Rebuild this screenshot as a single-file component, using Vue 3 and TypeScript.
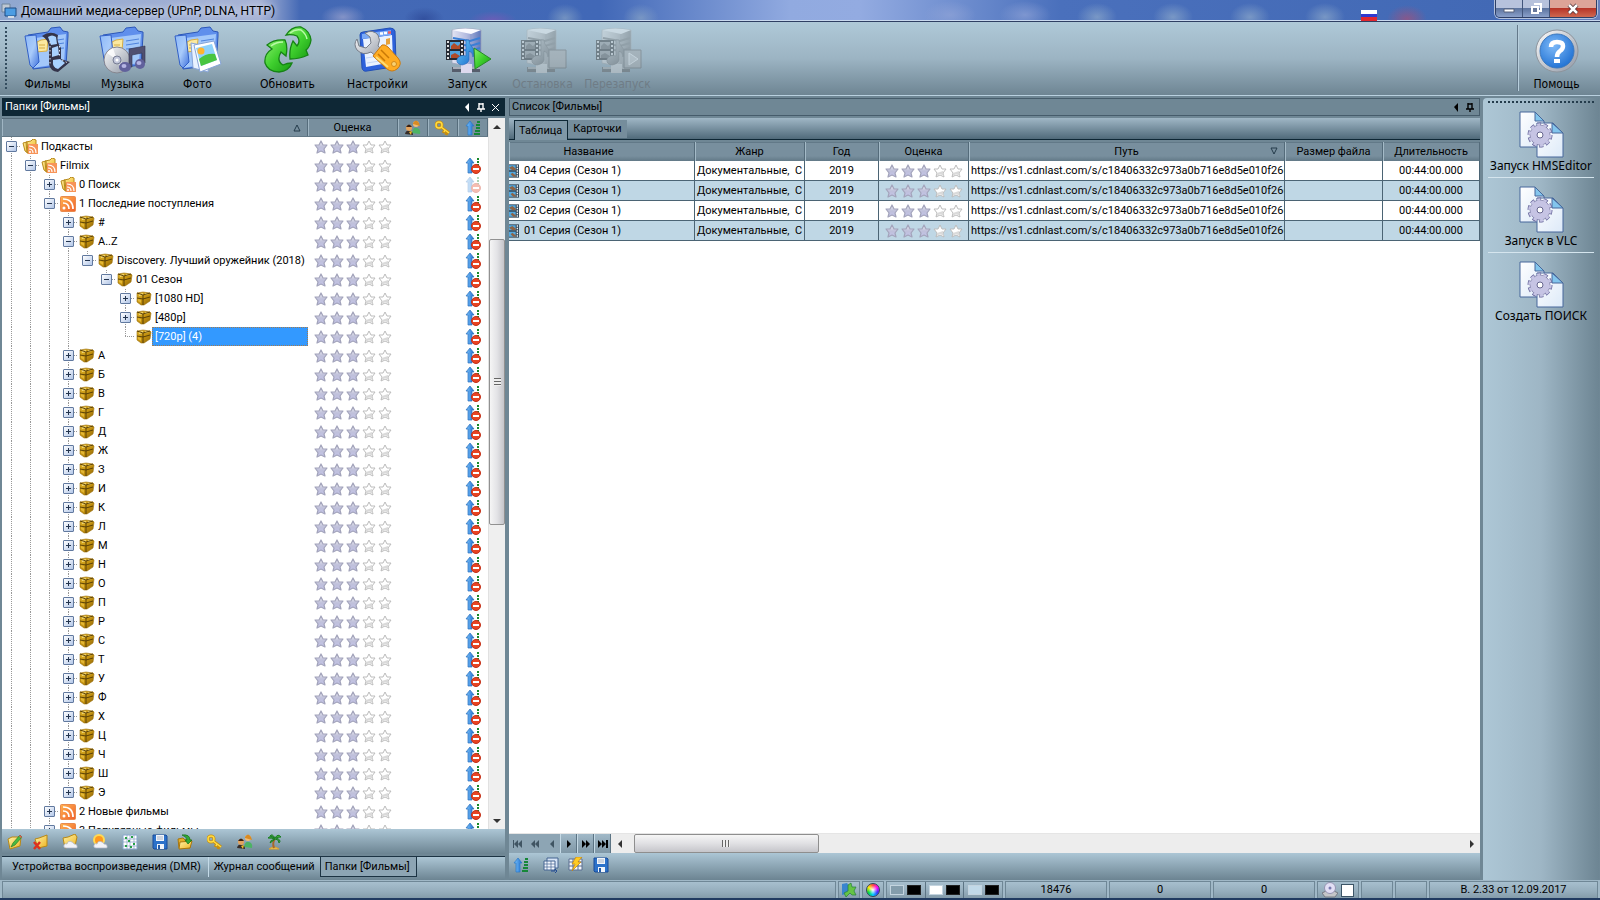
<script setup lang="ts">
import { ref } from 'vue'

interface ToolButton { label: string; icon: string; gap?: boolean; disabled?: boolean }
interface TreeNode { label: string; depth: number; icon: string; state: 'open' | 'closed' | 'leaf'; last?: boolean; arrow: 'none' | 'faded' | 'full'; selected?: boolean }

const tools: ToolButton[] = [
  { label: 'Фильмы', icon: 'films' },
  { label: 'Музыка', icon: 'music' },
  { label: 'Фото', icon: 'photo' },
  { label: 'Обновить', icon: 'refresh', gap: true },
  { label: 'Настройки', icon: 'settings', gap: true },
  { label: 'Запуск', icon: 'start', gap: true },
  { label: 'Остановка', icon: 'stop', disabled: true },
  { label: 'Перезапуск', icon: 'restart', disabled: true },
]

const letters = ['А', 'Б', 'В', 'Г', 'Д', 'Ж', 'З', 'И', 'К', 'Л', 'М', 'Н', 'О', 'П', 'Р', 'С', 'Т', 'У', 'Ф', 'Х', 'Ц', 'Ч', 'Ш', 'Э']

const nodes: TreeNode[] = [
  { label: 'Подкасты', depth: 0, icon: 'folder', state: 'open', arrow: 'none' },
  { label: 'Filmix', depth: 1, icon: 'folder', state: 'open', arrow: 'full' },
  { label: '0 Поиск', depth: 2, icon: 'folder', state: 'closed', arrow: 'faded' },
  { label: '1 Последние поступления', depth: 2, icon: 'rss', state: 'open', arrow: 'full' },
  { label: '#', depth: 3, icon: 'box', state: 'closed', arrow: 'full' },
  { label: 'A..Z', depth: 3, icon: 'box', state: 'open', arrow: 'full' },
  { label: 'Discovery. Лучший оружейник (2018)', depth: 4, icon: 'box', state: 'open', last: true, arrow: 'full' },
  { label: '01 Сезон', depth: 5, icon: 'box', state: 'open', last: true, arrow: 'full' },
  { label: '[1080 HD]', depth: 6, icon: 'box', state: 'closed', arrow: 'full' },
  { label: '[480p]', depth: 6, icon: 'box', state: 'closed', arrow: 'full' },
  { label: '[720p] (4)', depth: 6, icon: 'box', state: 'leaf', last: true, arrow: 'full', selected: true },
  ...letters.map((label, i): TreeNode => ({ label, depth: 3, icon: 'box', state: 'closed', last: i === letters.length - 1, arrow: 'full' })),
  { label: '2 Новые фильмы', depth: 2, icon: 'rss', state: 'closed', arrow: 'full' },
  { label: '3 Популярные фильмы', depth: 2, icon: 'rss', state: 'closed', arrow: 'full' },
]

const path = 'https://vs1.cdnlast.com/s/c18406332c973a0b716e8d5e010f266b'
const episodes = ['04', '03', '02', '01'].map((n) => ({
  name: `${n} Серия (Сезон 1)`, genre: 'Документальные,  С', year: '2019', path, size: '', duration: '00:44:00.000',
}))

const scripts = ['Запуск HMSEditor', 'Запуск в VLC', 'Создать ПОИСК']
const treeTools = [
  { icon: 'edit', name: 'Изменить' }, { icon: 'remove', name: 'Удалить' }, { icon: 'cloudfolder', name: 'Обзор' },
  { icon: 'weather', name: 'Погода' }, { icon: 'grid', name: 'Сетка' }, { icon: 'save', name: 'Сохранить' },
  { icon: 'load', name: 'Загрузить' }, { icon: 'key', name: 'Доступ' }, { icon: 'users', name: 'Пользователи' }, { icon: 'palm', name: 'Отдых' },
]
const listTools = [
  { icon: 'sort', name: 'Сортировка' }, { icon: 'columns', name: 'Столбцы' }, { icon: 'flash', name: 'Быстро' }, { icon: 'save', name: 'Сохранить' },
]
const navs = [
  { icon: 'first', on: false }, { icon: 'prevpage', on: false }, { icon: 'prev', on: false },
  { icon: 'next', on: true }, { icon: 'nextpage', on: true }, { icon: 'last', on: true },
]
const view = ref('Таблица')
const dock = ref('Папки [Фильмы]')
const checked = ref(false)
</script>

<template>
  <div class="app">
    <svg class="defs" aria-hidden="true">
      <defs>
        <linearGradient id="gBlue" x1="0" y1="0" x2="1" y2="1"><stop offset="0" stop-color="#8db9f8" /><stop offset=".5" stop-color="#a9cbfa" /><stop offset="1" stop-color="#3d70dc" /></linearGradient>
        <linearGradient id="gGreen" x1="0" y1="0" x2="1" y2="1"><stop offset="0" stop-color="#8af06c" /><stop offset=".5" stop-color="#3fcf2e" /><stop offset="1" stop-color="#169a12" /></linearGradient>
        <linearGradient id="gOrange" x1="0" y1="0" x2="1" y2="1"><stop offset="0" stop-color="#ffb34f" /><stop offset="1" stop-color="#f0602c" /></linearGradient>
        <linearGradient id="gSilver" x1="0" y1="0" x2="1" y2="1"><stop offset="0" stop-color="#fdfdfd" /><stop offset="1" stop-color="#8e96a4" /></linearGradient>
        <linearGradient id="gStar" x1="0" y1="0" x2="0" y2="1"><stop offset="0" stop-color="#ececf2" /><stop offset=".5" stop-color="#bfc0da" /><stop offset="1" stop-color="#c4c4ea" /></linearGradient>
        <linearGradient id="gArrow" x1="0" y1="0" x2="1" y2="0"><stop offset="0" stop-color="#7cc4fb" /><stop offset="1" stop-color="#1f6fd0" /></linearGradient>
        <linearGradient id="gGold" x1="0" y1="0" x2="1" y2="1"><stop offset="0" stop-color="#fff3a8" /><stop offset="1" stop-color="#eeb420" /></linearGradient>
        <linearGradient id="gBox" x1="0" y1="0" x2="1" y2="1"><stop offset="0" stop-color="#e2b62f" /><stop offset=".5" stop-color="#c4920f" /><stop offset="1" stop-color="#8d6408" /></linearGradient>
        <linearGradient id="gPage" x1="0" y1="0" x2="1" y2="1"><stop offset="0" stop-color="#ffffff" /><stop offset="1" stop-color="#dce9f8" /></linearGradient>
        <linearGradient id="gTower" x1="0" y1="0" x2="1" y2="0"><stop offset="0" stop-color="#e3e4f2" /><stop offset=".5" stop-color="#b3bbe0" /><stop offset="1" stop-color="#5e77bb" /></linearGradient>
        <linearGradient id="gNote" x1="0" y1="0" x2="1" y2="1"><stop offset="0" stop-color="#6fd0fb" /><stop offset="1" stop-color="#1566c9" /></linearGradient>
        <radialGradient id="gHelp" cx=".4" cy=".35" r=".7"><stop offset="0" stop-color="#7db9f8" /><stop offset="1" stop-color="#1f70d2" /></radialGradient>
      </defs>
      <symbol id="base-folder" viewBox="0 0 48 48">
        <path d="M4 9L24 6L27 2L36 1L39 5L44 6L44 10L42 39L9 43Z" fill="#5f8fec" stroke="#2c57b8" />
        <path d="M11 12L42 8L40 37L9 42Z" fill="#a3c8fa" />
        <path d="M13 16L17 14L24 13L23 25L12 26Z" fill="#fbe9a0" stroke="#d7ad43" />
        <path d="M15 19H21M15 22H21" stroke="#d7ad43" />
        <path d="M27 15L40 13M27 19L40 17M27 23L40 22" stroke="#4e83dd" />
        <path d="M1 10L12 9L15 36L9 42L6 39Z" fill="url(#gBlue)" stroke="#315fc7" />
      </symbol>
      <symbol id="i-films" viewBox="0 0 48 48">
        <use href="#base-folder" />
        <path d="M18 10Q26 4 34 9Q32 15 37 22V33L46 36L34 46Q26 45 25 38V22Q25 14 18 10Z" fill="#34344a" />
        <path d="M24 11Q28 8 32 11L33 18L27 19ZM28 22L34 20L35 29L28 31ZM29 34L36 33L41 37L34 43Q28 42 29 34Z" fill="#a9d2ff" />
        <path d="M26 16V40M35.500 20V32M38 34L44 37" stroke="#dfe4f0" stroke-width="1" stroke-dasharray="1.500 2.500" fill="none" />
      </symbol>
      <symbol id="i-music" viewBox="0 0 48 48">
        <use href="#base-folder" />
        <circle cx="18" cy="34" r="13" fill="url(#gSilver)" stroke="#85868f" />
        <path d="M18 34L8 27A13 13 0 0 1 14 22ZM18 34L29 40A13 13 0 0 1 23 45Z" fill="#fff" opacity=".8" />
        <circle cx="18" cy="34" r="4" fill="#c2c7da" stroke="#777d94" /><circle cx="18" cy="34" r="1.500" fill="#fff" />
        <path d="M30 23L46 20V37H43V27L33 29V41H30Z" fill="#505071" stroke="#34344f" stroke-width=".6" />
        <ellipse cx="26" cy="41" rx="6" ry="5" fill="#61619c" /><ellipse cx="41" cy="38" rx="5" ry="5" fill="#61619c" /><ellipse cx="25" cy="40" rx="2.500" ry="2" fill="#b5b5e4" /><ellipse cx="40" cy="37" rx="2.500" ry="2" fill="#b5b5e4" />
      </symbol>
      <symbol id="i-photo" viewBox="0 0 48 48">
        <use href="#base-folder" />
        <path d="M17 17L37 21L34 46L19 42Z" fill="#e9f2ff" stroke="#86a4d8" />
        <path d="M20 19L40 15L47 38L26 46Z" fill="#fff" stroke="#86a4d8" />
        <path d="M22 22L38 18L43 34L27 40Z" fill="#8fd2fb" /><path d="M25 33Q32 27 41 28L43 34L27 40Z" fill="#48c540" />
        <circle cx="27" cy="25" r="3.500" fill="#ffb42e" />
      </symbol>
      <symbol id="i-refresh" viewBox="0 0 48 48">
        <path d="M3 19Q10 13 21 14Q24 20 22 30L17 26Q12 35 19 39Q23 37 28 37Q25 45 15 46Q4 46 1 37Q0 28 8 23Z" fill="url(#gGreen)" stroke="#168315" stroke-width="1.300" />
        <path d="M22 9Q28 0 37 1Q46 5 47 14Q46 21 42 24L44 29Q36 33 26 33Q25 23 29 15L33 20Q37 15 33 10Q28 8 22 9Z" fill="url(#gGreen)" stroke="#168315" stroke-width="1.300" />
        <path d="M7 20Q12 16 19 16M26 7Q31 3 37 4Q42 8 43 13" fill="none" stroke="#b9f9a7" stroke-width="1.500" />
      </symbol>
      <symbol id="i-settings" viewBox="0 0 48 48">
        <path d="M6 9Q6 6 9 6L36 2Q40 2 41 5L42 37Q42 40 39 41L13 45Q9 46 8 42Z" fill="#2e62dc" stroke="#2350b5" />
        <path d="M9 13L38 9L39 36L12 41Z" fill="#eaf2ff" /><path d="M8 8L37 4V9L8 13Z" fill="#7aa9f6" />
        <path d="M26 7.500h3M30 7h3" stroke="#fff" stroke-width="2.500" /><path d="M34 6.500h3" stroke="#ef5a60" stroke-width="2.500" />
        <path d="M32 13L36 12V18L32 19Z" fill="#e6a23c" /><path d="M12 32L38 28M13 37L38 33" stroke="#c4d6f6" />
        <path d="M3 13L5 20L12 22L17 17L16 11L11 7Q19 3 24 9Q27 14 24 20L31 26L25 33L17 26Q9 30 3 24Q-1 18 3 13Z" fill="url(#gSilver)" stroke="#777d88" />
        <path d="M19 30L28 19Q31 18 34 21L44 32Q49 38 43 43Q38 47 33 43Z" fill="#ffac22" stroke="#c87913" /><path d="M24 28L31 35M27 24L35 32" stroke="#c97905" stroke-width="1.500" /><path d="M22 31L34 41" stroke="#ffdd73" stroke-width="2" /><circle cx="40" cy="38" r="2.500" fill="#f9d171" stroke="#d28a1a" />
      </symbol>
      <symbol id="base-server" viewBox="0 0 48 48">
        <path d="M8 4Q20 1 37 4V37L28 41L8 37Z" fill="url(#gTower)" stroke="#9a9db7" stroke-width=".7" />
        <path d="M8 4Q20 1 37 4L27 8Z" fill="#fafaff" /><path d="M27 8V40" stroke="#8d9bcc" />
        <path d="M9 12L26 15L36 12M20 19L26 20L36 17M20 24L26 25L36 22" fill="none" stroke="#3a7fd6" stroke-width="2" />
        <path d="M8 41H36V46H8Z" fill="#565d6c" /><path d="M9 42H36" stroke="#a7adb9" stroke-width="2" /><path d="M17 38H28V47H17Z" fill="#ddd9ee" />
        <path d="M2 14H20V34H2Z" fill="#272b34" /><path d="M6 16H16V23H6ZM6 25H16V32H6Z" fill="#51a4dd" /><path d="M4 15V33M18 15V33" stroke="#fff" stroke-width="1.700" stroke-dasharray="2 2" /><path d="M7 20L10 17L14 20L16 18V23H7ZM7 29L11 27L16 30V32H7Z" fill="#b04c28" />
        <path d="M22 14H25Q25 18 28 21Q32 25 29 31Q29 26 25 25V34Q24 38 18 39Q12 38 13 33Q16 28 22 30Z" fill="url(#gNote)" stroke="#2367ba" stroke-width=".6" />
      </symbol>
      <symbol id="i-start" viewBox="0 0 48 48"><use href="#base-server" /><path d="M30 22L47 33L31 43Z" fill="url(#gGreen)" stroke="#278a27" stroke-linejoin="round" /></symbol>
      <symbol id="i-stop" viewBox="0 0 48 48"><use href="#base-server" /><path d="M30 24H47V42H30Z" fill="#a6adb2" stroke="#5a626a" /></symbol>
      <symbol id="i-restart" viewBox="0 0 48 48"><use href="#base-server" /><path d="M30 24H47V42H30Z" fill="#a6adb2" stroke="#5a626a" /><path d="M35 27L44 33L35 39Z" fill="#ccc" stroke="#fff" /></symbol>
      <symbol id="i-help" viewBox="0 0 48 48">
        <circle cx="24" cy="25" r="21" fill="url(#gSilver)" stroke="#8d949c" /><circle cx="24" cy="25" r="17" fill="url(#gHelp)" stroke="#3c78bd" />
        <path d="M18 21Q18 16 24 16Q30 16 30 20Q30 23 27 25Q24 27 24 31" fill="none" stroke="#fff" stroke-width="4.500" /><path d="M21 33H27V37H21Z" fill="#fff" />
      </symbol>
      <symbol id="i-script" viewBox="0 0 48 48">
        <path d="M3 2H18L27 11V37H3Z" fill="url(#gPage)" stroke="#47679b" /><path d="M18 2V11H27Z" fill="#83c5ed" stroke="#47679b" />
        <path d="M20 13H36L46 23V47H20Z" fill="url(#gPage)" stroke="#47679b" /><path d="M35 13V23H46Z" fill="#83c5ed" stroke="#47679b" />
        <circle cx="23" cy="25" r="10.500" fill="none" stroke="#66669a" stroke-width="4" stroke-dasharray="4 2.600" /><circle cx="23" cy="25" r="10" fill="#c6c4e4" stroke="#77759f" stroke-width=".7" /><circle cx="23" cy="25" r="10.500" fill="none" stroke="#c6c4e4" stroke-width="2.500" stroke-dasharray="3.400 3.200" />
        <circle cx="23" cy="25" r="3" fill="#fff" stroke="#67678f" />
      </symbol>
      <symbol id="i-folder" viewBox="0 0 16 16"><path d="M1 4L5 3L6 14L3 12ZM4 3L9 2L11 0L14 1V13L5 14Z" fill="url(#gGold)" stroke="#b88a1d" /><rect x="6" y="5" width="10" height="10" fill="#f79458" /><circle cx="8" cy="13" r="1" fill="#fff" /><path d="M7 10Q11 10 11 14M7 7Q14 7 14 14" fill="none" stroke="#fff" stroke-width="1.200" /></symbol>
      <symbol id="i-rss" viewBox="0 0 16 16"><rect x=".5" y=".5" width="15" height="15" rx="1" fill="url(#gOrange)" stroke="#e98a4e" /><circle cx="4" cy="12" r="1.500" fill="#fff" /><path d="M3 7Q9 7 9 13M3 3Q13 3 13 13" fill="none" stroke="#fff" stroke-width="1.700" /></symbol>
      <symbol id="i-box" viewBox="0 0 16 16"><path d="M1 2L7 1L14 2L15 3L14 10L8 14L5 14L1 11Z" fill="url(#gBox)" stroke="#9a6f0c" stroke-width=".6" /><path d="M3 3L7 2V4L3 5ZM9 2L13 3L9 4Z" fill="#f6dc7a" /><path d="M2 8L5 9V12L2 10Z" fill="#e3b735" /><path d="M1 7L7 8L14 6M7 4V14M1 2L7 4L14 2" fill="none" stroke="#4f3805" stroke-width=".9" /></symbol>
      <symbol id="i-star" viewBox="0 0 16 16"><path d="M8 2L10 6H14L11 10L12 14L8 12L4 14L5 10L2 6H6Z" fill="url(#gStar)" stroke="#a3a4bb" stroke-width="1.200" stroke-linejoin="round" /></symbol>
      <symbol id="i-empty" viewBox="0 0 16 16"><path d="M8 2L10 6H14L11 10L12 14L8 12L4 14L5 10L2 6H6Z" fill="#fff" stroke="#bcbcbc" stroke-linejoin="round" /><path d="M5 10L11 8L11 10L12 13L8 11L5 13Z" fill="#dadada" /></symbol>
      <symbol id="i-up" viewBox="0 0 16 16"><path d="M5 0L9 5H7V15H3V5H1Z" fill="url(#gArrow)" stroke="#2a6fbb" stroke-width=".7" /><path d="M13 0V7" stroke="#18892b" stroke-width="2" stroke-dasharray="2 1" /><circle cx="11" cy="11" r="4.500" fill="#e84422" stroke="#c23018" /><path d="M8 11H14" stroke="#fff" stroke-width="2" /></symbol>
      <symbol id="i-sort" viewBox="0 0 16 16"><path d="M5 1L9 6H7V15H3V6H1Z" fill="url(#gArrow)" stroke="#2a78c8" stroke-width=".7" /><path d="M12 2H15M11 5H15M11 8H15M10 11H15M9 14H15" stroke="#168738" stroke-width="2" /></symbol>
      <symbol id="i-key" viewBox="0 0 16 16"><circle cx="4" cy="5" r="3" fill="none" stroke="#c98e0c" stroke-width="3" /><path d="M6 7L14 13M10 10L8 13M12 12L11 15" stroke="#c98e0c" stroke-width="3" /><circle cx="4" cy="5" r="3" fill="none" stroke="#ffdc42" stroke-width="1.500" /><path d="M6 7L14 13M10 10L9 12" stroke="#ffdc42" stroke-width="1.500" /></symbol>
      <symbol id="i-users" viewBox="0 0 16 16"><circle cx="11" cy="4" r="3" fill="#f4bd76" /><path d="M8 3Q11-2 14 3L15 6L8 4Z" fill="#d98b23" /><path d="M7 13Q8 7 12 8Q16 9 15 14Z" fill="#4cb364" /><circle cx="4" cy="8" r="3" fill="#e4a35d" /><path d="M1 7Q4 2 7 7Z" fill="#382013" /><path d="M0 14Q1 10 4 11Q8 11 8 15Z" fill="#362d29" /><path d="M4 12L7 11L6 15Z" fill="#f1bb22" /></symbol>
      <symbol id="i-edit" viewBox="0 0 16 16"><path d="M1 5L5 3L14 3L13 12L3 15Z" fill="url(#gGold)" stroke="#b88816" /><path d="M4 13L6 9L13 1L15 3L8 11Z" fill="#48bb43" stroke="#297d2a" stroke-width=".7" /><path d="M12 2L13 1L15 3L14 4Z" fill="#e55" /></symbol>
      <symbol id="i-remove" viewBox="0 0 16 16"><path d="M3 5L7 4L15 1V12L6 14Z" fill="url(#gGold)" stroke="#b88816" /><path d="M2 8L8 15M8 8L2 15" stroke="#dd301d" stroke-width="2.500" /></symbol>
      <symbol id="base-cloud" viewBox="0 0 16 16"><path d="M4 14Q1 14 2 11Q3 9 5 10Q6 6 10 8Q12 9 12 10Q16 10 15 14Z" fill="#f2f3f7" stroke="#acb3c4" stroke-width=".7" /></symbol>
      <symbol id="i-cloudfolder" viewBox="0 0 16 16"><path d="M1 4L6 3L13 0L15 3L13 12L3 14Z" fill="url(#gGold)" stroke="#b88816" /><use href="#base-cloud" /></symbol>
      <symbol id="i-weather" viewBox="0 0 16 16"><circle cx="7" cy="6" r="6" fill="#ffda54" /><circle cx="7" cy="6" r="4" fill="#ff981e" /><use href="#base-cloud" /></symbol>
      <symbol id="i-grid" viewBox="0 0 16 16"><path d="M1 1H15V15H1Z" fill="#fff" stroke="#8aa8ce" /><path d="M5 1V15M8 1V15M12 1V15M1 5H15M1 8H15M1 12H15" stroke="#7695bd" stroke-width=".6" /><path d="M3 3h2v2h-2zM9 2h2v2h-2zM6 6h2v2h-2zM11 9h2v2h-2zM3 11h2v2h-2zM8 12h2v2h-2z" fill="#27a047" /></symbol>
      <symbol id="i-save" viewBox="0 0 16 16"><path d="M1 1H14L15 2V15H2L1 14Z" fill="#2c72ca" stroke="#184b98" /><path d="M4 1H12V7H4ZM5 10H12V15H5Z" fill="#f1f5fb" /><path d="M5 3H11M5 5H11" stroke="#a9b4c5" /><path d="M6 11H8V15H6Z" fill="#245ca9" /></symbol>
      <symbol id="i-load" viewBox="0 0 16 16"><path d="M1 5L6 4L8 6L13 5V14H2Z" fill="#e4ae27" stroke="#a9760d" /><path d="M3 8L15 7L13 14L2 15Z" fill="url(#gGold)" stroke="#a9760d" /><path d="M5 1Q13 0 13 6H15L11 10L8 6H10Q10 3 5 1Z" fill="#31a936" stroke="#147019" stroke-width=".7" /></symbol>
      <symbol id="i-palm" viewBox="0 0 16 16"><path d="M2 15Q7 11 12 15Z" fill="#f6ce62" stroke="#d9a12c" /><path d="M8 5Q5 9 7 14" fill="none" stroke="#a8682a" stroke-width="2" /><path d="M8 5Q3 1 1 4Q5 4 8 5Q3 6 3 9Q6 7 8 5Q12 5 12 9Q15 6 9 4Q12 3 14 3Q11-1 8 4Q5-1 3 2Q6 2 8 5Z" fill="#3cae39" stroke="#1c7d25" stroke-width="1" /></symbol>
      <symbol id="i-columns" viewBox="0 0 16 16"><path d="M4 1H15V11H4Z" fill="#d5e3f5" stroke="#456492" /><path d="M1 4H12V13H1Z" fill="#f2f6fd" stroke="#456492" /><path d="M1 7H12M1 10H12M4 4V13M8 4V13" stroke="#456492" stroke-width=".7" /><path d="M8 14H12V12L14 14L12 16" fill="none" stroke="#234b93" /></symbol>
      <symbol id="i-flash" viewBox="0 0 16 16"><path d="M1 2H14V13H1Z" fill="#f4f6fa" stroke="#5a6f91" /><path d="M1 5H14M1 9H14M5 2V13M10 2V13" stroke="#5a6f91" /><path d="M8 0H14L10 5H13L4 14L7 7H4Z" fill="#ffcb23" stroke="#c28210" stroke-width=".7" /></symbol>
      <symbol id="i-clip" viewBox="0 0 12 16"><path d="M0 0H12V16H0Z" fill="#34495a" /><path d="M0 1H8V7H0ZM0 9H8V15H0Z" fill="#54a9df" /><path d="M0 4L4 2L8 5V7H4ZM2 12L4 10L8 13V15H5Z" fill="#8c6346" /><path d="M10 1V16" stroke="#fff" stroke-width="1.500" stroke-dasharray="2 1" /></symbol>
      <symbol id="i-pin" viewBox="0 0 9 9"><path d="M2 0V6M6 0V6M2 1H6M0 6H8M4 6V9" fill="none" stroke="currentColor" stroke-width="1.400" /></symbol>
      <symbol id="i-arrowleft" viewBox="0 0 9 9"><path d="M6 0V9L2 4Z" fill="currentColor" /></symbol>
      <symbol id="i-close" viewBox="0 0 9 9"><path d="M1 1L8 8M8 1L1 8" stroke="currentColor" /></symbol>
      <symbol id="i-first" viewBox="0 0 10 8"><path d="M0 0H1V8H0ZM5 0V8L1 4ZM9 0V8L5 4Z" /></symbol>
      <symbol id="i-prevpage" viewBox="0 0 10 8"><path d="M5 0V8L1 4ZM9 0V8L5 4Z" /></symbol>
      <symbol id="i-prev" viewBox="0 0 10 8"><path d="M7 0V8L3 4Z" /></symbol>
      <symbol id="i-next" viewBox="0 0 10 8"><path d="M3 0V8L7 4Z" /></symbol>
      <symbol id="i-nextpage" viewBox="0 0 10 8"><path d="M1 0V8L5 4ZM5 0V8L9 4Z" /></symbol>
      <symbol id="i-last" viewBox="0 0 10 8"><path d="M0 0V8L4 4ZM4 0V8L8 4ZM8 0H10V8H8Z" /></symbol>
      <symbol id="i-puzzle" viewBox="0 0 16 16"><path d="M1 2L6 1L8 4V11L1 13Z" fill="#3985cf" /><path d="M7 3L10 1L11 5L15 5L13 9L15 13L11 13L9 11L5 15L3 11L7 9Z" fill="#65c346" stroke="#24803b" stroke-width=".7" /></symbol>
      <symbol id="i-disc" viewBox="0 0 16 16"><path d="M0 11L8 7L16 11L13 15H3Z" fill="#c4c6c9" stroke="#757a83" /><circle cx="8" cy="6" r="5.500" fill="#e2dff5" stroke="#9494b1" /><circle cx="8" cy="6" r="1.500" fill="#7979af" /></symbol>
      <symbol id="i-app" viewBox="0 0 16 16"><path d="M1 1H9V9H1Z" fill="#bfc8d3" stroke="#71859b" /><path d="M4 5H15V13H4Z" fill="#4c9de3" stroke="#1f4c83" /><path d="M7 14H13" stroke="#d4dce5" stroke-width="2" /></symbol>
    </svg>

    <header class="title">
      <svg class="s16"><use href="#i-app" /></svg>
      <h1>Домашний медиа-сервер (UPnP, DLNA, HTTP)</h1>
      <span class="flag"></span>
      <div class="winbtns">
        <button aria-label="Свернуть"><svg viewBox="0 0 12 12"><path d="M1 6H11V9H1Z" fill="#fff" stroke="#57607a" /></svg></button>
        <button aria-label="Восстановить"><svg viewBox="0 0 12 12"><path d="M4 1H11V8H9" fill="none" stroke="#fff" stroke-width="2" /><path d="M2 4H8V10H2Z" fill="#68789b" stroke="#fff" stroke-width="2" /></svg></button>
        <button class="x" aria-label="Закрыть"><svg viewBox="0 0 12 12"><path d="M2 2L10 10M10 2L2 10" stroke="#4c3035" stroke-width="4" /><path d="M2 2L10 10M10 2L2 10" stroke="#fff" stroke-width="2.500" /></svg></button>
      </div>
    </header>

    <nav class="toolbar">
      <span class="grip"></span>
      <button v-for="t in tools" :key="t.label" class="big" :class="{ gap: t.gap, off: t.disabled }" :disabled="t.disabled">
        <svg class="s48"><use :href="`#i-${t.icon}`" /></svg><span>{{ t.label }}</span>
      </button>
      <button class="big help"><svg class="s48"><use href="#i-help" /></svg><span>Помощь</span></button>
    </nav>

    <main class="body">
      <section class="left">
        <div class="dockhead dark">
          <h2>Папки [Фильмы]</h2>
          <button aria-label="Назад"><svg><use href="#i-arrowleft" /></svg></button>
          <button aria-label="Закрепить"><svg><use href="#i-pin" /></svg></button>
          <button aria-label="Закрыть панель"><svg><use href="#i-close" /></svg></button>
        </div>
        <div class="treewrap">
          <div class="treemain">
            <div class="trow thead">
              <span class="c1"><svg class="tri" viewBox="0 0 8 8"><path d="M4 1L7 7H1Z" /></svg></span><span class="c2">Оценка</span>
              <span class="c3"><svg class="s16"><use href="#i-users" /></svg></span><span class="c3"><svg class="s16"><use href="#i-key" /></svg></span><span class="c3"><svg class="s16"><use href="#i-sort" /></svg></span>
            </div>
            <div class="tree" role="tree">
              <div v-for="(n, i) in nodes" :key="i" class="trow" role="treeitem" :aria-level="n.depth + 1" :aria-selected="!!n.selected">
                <span class="c1">
                  <i v-for="k in n.depth" :key="k" class="guide" :class="{ line: k <= 3 || (k === 4 && n.depth > 3) }"></i>
                  <span class="knot" :class="{ last: n.last }">
                    <button v-if="n.state !== 'leaf'" class="exp" :aria-label="n.state === 'open' ? 'Свернуть' : 'Развернуть'"><svg viewBox="0 0 9 9"><path :d="n.state === 'open' ? 'M2 4.5H7' : 'M2 4.5H7M4.5 2V7'" /></svg></button>
                  </span>
                  <svg class="s16 nicon"><use :href="`#i-${n.icon}`" /></svg>
                  <span class="lbl" :class="{ sel: n.selected }">{{ n.label }}</span>
                </span>
                <span class="c2 stars"><svg v-for="s in 5" :key="s" class="s16"><use :href="s <= 3 ? '#i-star' : '#i-empty'" /></svg></span>
                <span class="c3"></span><span class="c3"></span>
                <span class="c3"><svg v-if="n.arrow !== 'none'" class="s16" :class="{ faded: n.arrow === 'faded' }"><use href="#i-up" /></svg></span>
              </div>
            </div>
          </div>
          <div class="vscroll">
            <button aria-label="Вверх"><svg viewBox="0 0 8 8"><path d="M4 2L8 6H0Z" /></svg></button>
            <span class="sp1"></span><span class="vthumb"></span><span class="sp2"></span>
            <button aria-label="Вниз"><svg viewBox="0 0 8 8"><path d="M0 2H8L4 6Z" /></svg></button>
          </div>
        </div>
        <div class="smallbar">
          <button v-for="t in treeTools" :key="t.icon" :class="t.icon" :aria-label="t.name"><svg class="s16"><use :href="`#i-${t.icon}`" /></svg></button>
        </div>
        <div class="docktabs">
          <button v-for="t in ['Устройства воспроизведения (DMR)', 'Журнал сообщений', 'Папки [Фильмы]']" :key="t" :class="{ on: t === dock }" @click="dock = t">{{ t }}</button>
        </div>
      </section>

      <section class="center">
        <div class="dockhead">
          <h2>Список [Фильмы]</h2>
          <button aria-label="Назад"><svg><use href="#i-arrowleft" /></svg></button>
          <button aria-label="Закрепить"><svg><use href="#i-pin" /></svg></button>
        </div>
        <div class="viewtabs"><button v-for="t in ['Таблица', 'Карточки']" :key="t" :class="{ on: t === view }" @click="view = t">{{ t }}</button></div>
        <div class="list">
          <table>
            <colgroup><col class="w-name" /><col class="w-genre" /><col class="w-year" /><col class="w-rate" /><col /><col class="w-size" /><col class="w-dur" /></colgroup>
            <thead><tr><th class="hname">Название</th><th>Жанр</th><th>Год</th><th>Оценка</th><th class="sorted">Путь<svg class="tri" viewBox="0 0 8 8"><path d="M1 1H7L4 7Z" /></svg></th><th>Размер файла</th><th>Длительность</th></tr></thead>
            <tbody>
              <tr v-for="e in episodes" :key="e.name">
                <td class="name"><div><svg class="clip"><use href="#i-clip" /></svg>{{ e.name }}</div></td><td>{{ e.genre }}</td><td class="mid">{{ e.year }}</td>
                <td><div class="stars"><svg v-for="s in 5" :key="s" class="s16"><use :href="s <= 3 ? '#i-star' : '#i-empty'" /></svg></div></td>
                <td>{{ e.path }}</td><td>{{ e.size }}</td><td class="mid">{{ e.duration }}</td>
              </tr>
            </tbody>
          </table>
        </div>
        <div class="navrow">
          <button v-for="n in navs" :key="n.icon" class="nav" :class="{ live: n.on }" :aria-label="n.icon"><svg><use :href="`#i-${n.icon}`" /></svg></button>
          <div class="hscroll">
            <button aria-label="Влево"><svg viewBox="0 0 8 8"><path d="M6 0V8L2 4Z" /></svg></button><span class="hthumb"></span><span class="fill"></span><button aria-label="Вправо"><svg viewBox="0 0 8 8"><path d="M2 0V8L6 4Z" /></svg></button>
          </div>
        </div>
        <div class="listbar"><button v-for="t in listTools" :key="t.icon" :class="t.icon" :aria-label="t.name"><svg class="s16"><use :href="`#i-${t.icon}`" /></svg></button></div>
      </section>

      <aside class="side">
        <span class="hgrip"></span>
        <button v-for="s in scripts" :key="s"><svg class="s48"><use href="#i-script" /></svg><span>{{ s }}</span></button>
      </aside>
    </main>

    <footer class="status">
      <span class="cell grow"></span>
      <span class="cell ico"><svg class="s16"><use href="#i-puzzle" /></svg></span>
      <span class="cell ico"><i class="wheel"></i></span>
      <span class="cell swatches"><b><i class="steel"></i><i class="black"></i></b><b><i class="white"></i><i class="black"></i></b><b><i class="pale"></i><i class="black"></i></b></span>
      <span class="cell num">18476</span><span class="cell num">0</span><span class="cell num">0</span>
      <label class="cell disc"><svg class="s16"><use href="#i-disc" /></svg><input v-model="checked" type="checkbox" aria-label="Диск" /></label>
      <span class="cell blank"></span><span class="cell blank"></span>
      <span class="cell ver">В. 2.33 от 12.09.2017</span>
    </footer>
  </div>
</template>

<style>
body { margin: 0; overflow: hidden; }
</style>

<style scoped>
* { box-sizing: border-box; }
.app { height: 100vh; display: flex; flex-direction: column; overflow: hidden; background: #6f8795; color: #000; font: 11px/14px Roboto, "DejaVu Sans Condensed", sans-serif; }
.defs { position: absolute; width: 0; height: 0; }
button { font: inherit; color: inherit; border: 0; padding: 0; background: none; display: flex; align-items: center; justify-content: center; }
h1, h2 { margin: 0; font: inherit; white-space: nowrap; }
.s16 { width: 16px; height: 16px; flex: none; }
.s48 { width: 48px; height: 48px; flex: none; }
.faded { opacity: .35; }

.title { flex: none; height: 22px; display: flex; align-items: center; position: relative; border-bottom: 1px solid #2f3f63; box-shadow: inset 0 -1px #c8d8ee;
  background:
    radial-gradient(ellipse 22px 12px at 343px 17px, #a3a8d0aa, transparent),
    radial-gradient(ellipse 20px 12px at 424px 19px, #27408f99, transparent),
    radial-gradient(ellipse 24px 9px at 493px 20px, #8457b799, transparent),
    radial-gradient(ellipse 18px 14px at 565px 18px, #8ba6c6aa, transparent),
    radial-gradient(ellipse 18px 14px at 641px 18px, #8ba6c6aa, transparent),
    radial-gradient(ellipse 26px 14px at 950px 15px, #91a4d7aa, transparent),
    radial-gradient(ellipse 26px 14px at 1025px 15px, #91a4d7aa, transparent),
    radial-gradient(ellipse 20px 14px at 1097px 17px, #91accbaa, transparent),
    radial-gradient(ellipse 20px 14px at 1173px 17px, #91accbaa, transparent),
    radial-gradient(ellipse 20px 14px at 1250px 17px, #91accbaa, transparent),
    radial-gradient(ellipse 20px 14px at 1325px 17px, #91accbaa, transparent),
    radial-gradient(ellipse 20px 14px at 1407px 19px, #a84f76aa, transparent),
    linear-gradient(90deg, #8fa7cf 0, #a7b3d6 260px, #4469b5 300px, #4168b7 600px, #91aae0 790px, #93abe1 860px, #4a70bc 1060px, #4269b5 1500px, #6680bc 1600px); }
.title .s16 { margin-left: 1px; }
.title h1 { margin-left: 4px; font: 12px/20px Roboto, "Noto Sans", sans-serif; text-shadow: 0 0 6px #fff; flex: 1; }
.flag { width: 16px; height: 11px; align-self: flex-end; margin: 0 118px 0 0; background: linear-gradient(#fff 0 33%, #3039cf 33% 66%, #e0272f 66%); }
.winbtns { display: flex; align-self: flex-start; height: 18px; margin-right: 3px; border: 1px solid #2e3f66; border-top: 0; border-radius: 0 0 5px 5px; overflow: hidden; box-shadow: 0 0 0 1px #b3c1dc; }
.winbtns button { width: 27px; height: 17px; border-right: 1px solid #42557b; background: linear-gradient(#b7c2dc 0 45%, #5d749f 50%, #8aa0ca); }
.winbtns .x { width: 46px; border: 0; background: linear-gradient(#dda498 0 45%, #b73528 50%, #cf6850); }
.winbtns svg { width: 12px; height: 12px; }

.toolbar { flex: none; height: 74px; display: flex; padding: 3px 5px 0 3px; border-bottom: 1px solid #b9d0df; background: linear-gradient(#afc9d8, #9cb4c3 50%, #6e8593); }
.grip { width: 2px; height: 62px; margin: 2px 3px 0 2px; background: repeating-linear-gradient(#344d5f 0 2px, transparent 2px 4px); }
.big { width: 75px; height: 66px; flex: none; flex-direction: column; justify-content: flex-start; gap: 2px; padding-top: 1px; font: 12px/16px "DejaVu Sans Condensed", "Noto Sans", sans-serif; white-space: nowrap; }
.big.gap { margin-left: 15px; }
.big.off { color: #6f7c86; }
.big.off svg { filter: grayscale(1); opacity: .4; }
.help { width: 78px; margin-left: auto; border-left: 1px solid #64798a; box-shadow: inset 1px 0 #b8cfdd; }

.body { flex: 1; min-height: 0; display: flex; padding-top: 2px; }
.left { width: 505px; flex: none; padding-left: 2px; display: flex; flex-direction: column; }
.center { flex: 1; min-width: 0; margin-left: 4px; display: flex; flex-direction: column; }
.dockhead { flex: none; height: 18px; margin-bottom: 2px; display: flex; align-items: center; gap: 5px; padding: 0 4px 0 2px; border: 1px solid #465c6b; background: #6f8795; }
.dockhead h2 { flex: 1; }
.dockhead button, .dockhead svg { width: 9px; height: 9px; }
.dark { background: #0e2735; border-color: #0e2735; color: #fff; }
.treewrap { flex: 1; min-height: 0; display: flex; background: #fff; }
.treemain { flex: 1; min-width: 0; display: flex; flex-direction: column; overflow: hidden; }
.tree { flex: 1; min-height: 0; overflow: hidden; }
.trow { display: grid; grid-template-columns: minmax(0, 1fr) 90px 30px 30px 30px; height: 19px; }
.trow > span { display: flex; align-items: center; min-width: 0; }
.trow > .c3 { justify-content: center; }
.thead { flex: none; background: #788f9e; border-top: 1px solid #566b79; border-bottom: 1px solid #627886; }
.thead > span { border-right: 1px solid #566d7c; box-shadow: inset 1px 0 #9fb5c3; justify-content: center; }
.thead > .c1 { justify-content: flex-end; padding-right: 6px; }
.tri { width: 8px; height: 8px; fill: none; stroke: #243b4b; }
.guide, .knot { width: 19px; height: 19px; flex: none; display: flex; align-items: center; justify-content: center; }
.line { background: repeating-linear-gradient(#999 0 1px, transparent 1px 2px) 9px 0 / 1px 100% no-repeat; }
.knot { background: repeating-linear-gradient(#999 0 1px, transparent 1px 2px) 9px 0 / 1px 100% no-repeat, repeating-linear-gradient(90deg, #999 0 1px, transparent 1px 2px) 9px 9px / 10px 1px no-repeat; }
.knot.last { background-size: 1px 10px, 10px 1px; }
.exp { width: 11px; height: 11px; border: 1px solid #61799f; border-radius: 1px; background: linear-gradient(135deg, #fff, #b3c7e8); }
.exp svg { width: 9px; height: 9px; flex: none; stroke: #23344e; }
.nicon { margin-left: 1px; }
.lbl { flex: 1; height: 19px; line-height: 19px; padding-left: 3px; white-space: nowrap; overflow: hidden; }
.sel { background: #3399ff; color: #fff; border: 1px dotted #a27b50; line-height: 17px; padding-left: 2px; }
.stars { display: flex; align-items: center; }
.c2.stars { padding-left: 5px; }
.vscroll { width: 17px; display: flex; flex-direction: column; background: #efefef; border-left: 1px solid #e1e1e1; }
.vscroll button { height: 17px; }
.vscroll svg, .hscroll svg { width: 8px; height: 8px; fill: #333; }
.sp1 { flex: 105; }
.vthumb { flex: 286; border: 1px solid #919191; border-radius: 2px; background: repeating-linear-gradient(#666 0 1px, #eee 1px 3px) center / 7px 8px no-repeat, linear-gradient(90deg, #f5f5f5, #e3e3e6 50%, #c5c5ca); }
.sp2 { flex: 289; }
.smallbar { flex: none; height: 25px; display: flex; align-items: center; background: linear-gradient(#acc6d5, #6c8492); }
.smallbar button { width: 25px; height: 22px; }
.smallbar .cloudfolder, .smallbar .weather, .smallbar .grid, .smallbar .save, .smallbar .key, .smallbar .users, .smallbar .palm { margin-left: 5px; }
.docktabs { flex: none; height: 24px; margin: 2px 0 0; border-top: 1px solid #1c3343; display: flex; align-items: flex-start; padding: 0 0 0 3px; background: linear-gradient(#acc6d5, #6c8492); }
.docktabs button { height: 20px; padding: 0 7px; white-space: nowrap; }
.docktabs button + button { padding: 0 5px; border-left: 1px solid #c4dae7; }
.docktabs button.on { border: 1px solid #1c3343; border-top: 0; padding: 0 6px 0 4px; background: #8da5b4; }

.viewtabs { flex: none; height: 22px; display: flex; align-items: flex-end; padding-left: 5px; border-bottom: 1px solid #0e2735; background: linear-gradient(#a0b7c6, #506a7a); }
.viewtabs button { height: 18px; margin-bottom: 1px; padding: 0 5px; background: #758d9c; }
.viewtabs .on { height: 20px; margin: 0 0 -1px; padding: 0 5px 0 4px; background: #7f97a6; border: 1px solid #0e2735; border-bottom: 0; }
.list { flex: 1; min-height: 0; margin-top: 2px; background: #fff; overflow: hidden; }
table { width: 100%; table-layout: fixed; border-collapse: separate; border-spacing: 0; }
.w-name { width: 186px; } .w-genre { width: 110px; } .w-year { width: 74px; } .w-rate { width: 90px; } .w-size { width: 98px; } .w-dur { width: 97px; }
th { height: 19px; padding: 0; font-weight: 400; text-align: center; background: linear-gradient(#627988 0 1px, #788f9e 1px 14px, #627987); box-shadow: inset 1px 0 #a4bac7; border-right: 1px solid #546b7a; white-space: nowrap; }
.hname { padding-right: 26px; }
.sorted { position: relative; }
.sorted svg { position: absolute; right: 6px; top: 5px; }
td { height: 20px; padding: 0 2px; white-space: pre; overflow: hidden; border-right: 1px solid #4b6474; border-bottom: 1px solid #4b6474; }
tr:nth-child(even) td { background: #bfd7e5; }
.name { padding: 0; }
.name div { display: flex; align-items: center; gap: 5px; }
.clip { width: 10px; height: 16px; flex: none; }
.mid { text-align: center; }
td .stars { padding-left: 3px; }
.navrow { flex: none; height: 20px; display: flex; background: #8da5b4; border-top: 1px solid #e5e5e5; }
.nav { width: 17px; fill: #405563; }
.nav svg { width: 10px; height: 8px; }
.nav.live { fill: #000; background: linear-gradient(#a1b9c8, #7f97a6); border-left: 1px solid #c5dae6; border-right: 1px solid #5c7484; }
.hscroll { flex: 1; display: flex; background: #ededed; }
.hscroll button { width: 17px; }
.hthumb { flex: 183; margin-left: 6px; border: 1px solid #8e8e8e; border-radius: 2px; background: repeating-linear-gradient(90deg, #666 0 1px, #eee 1px 3px) center / 8px 7px no-repeat, linear-gradient(#f6f6f6, #e0e0e3 50%, #c5c5ca); }
.fill { flex: 646; }
.listbar { flex: none; height: 27px; display: flex; align-items: flex-start; padding: 4px 0 0 4px; background: linear-gradient(#acc6d5, #6c8492); }
.listbar button { width: 16px; margin-right: 9px; }
.listbar .sort { margin-right: 14px; }

.side { width: 116px; flex: none; margin: 0 1px 0 3px; display: flex; flex-direction: column; align-items: stretch; padding: 3px 5px; border-radius: 4px 0 0 0; background: linear-gradient(90deg, #adc7d6, #9eb6c5 50%, #6d8593); }
.hgrip { height: 2px; flex: none; background: repeating-linear-gradient(90deg, #243c4c 0 2px, transparent 2px 4px); }
.side button { height: 75px; flex: none; flex-direction: column; justify-content: flex-start; padding-top: 7px; border-bottom: 1px solid #d5e5ee; font: 12px/16px "Noto Sans", sans-serif; white-space: nowrap; }
.side button:last-child { border: 0; }

.status { flex: none; height: 20px; display: flex; gap: 2px; padding: 1px 2px 0; background: #a0b8c7; border-bottom: 2px solid #213b61; }
.cell { border: 1px solid #6f8796; border-bottom: 0; display: flex; align-items: center; justify-content: center; background: linear-gradient(#a7bfce, #95adbc 60%, #849caa); min-width: 0; }
.grow { flex: 1; }
.ico { width: 22px; }
.wheel { width: 14px; height: 14px; border-radius: 50%; background: radial-gradient(circle, #fff, transparent 55%), conic-gradient(#f44, #f0f, #33f, #0cf, #0d4, #fe0, #f44); border: 1px solid #345; }
.swatches { width: 117px; }
.swatches b { flex: 1; height: 100%; display: flex; align-items: center; justify-content: center; gap: 3px; border-right: 1px solid #5c7484; }
.swatches b:last-child { border: 0; }
.swatches i { width: 14px; height: 10px; border: 1px solid #c4d4df; }
.steel { background: #849dac; } .white { background: #fff; } .pale { background: #c1d9e8; }
.swatches .black { background: #000; border-color: #222; }
.num { width: 102px; }
.disc { width: 42px; gap: 3px; }
.disc input { appearance: none; margin: 0; width: 13px; height: 13px; border: 1px solid #3c5567; background: #fff; }
.blank { width: 32px; }
.ver { width: 169px; }
</style>
